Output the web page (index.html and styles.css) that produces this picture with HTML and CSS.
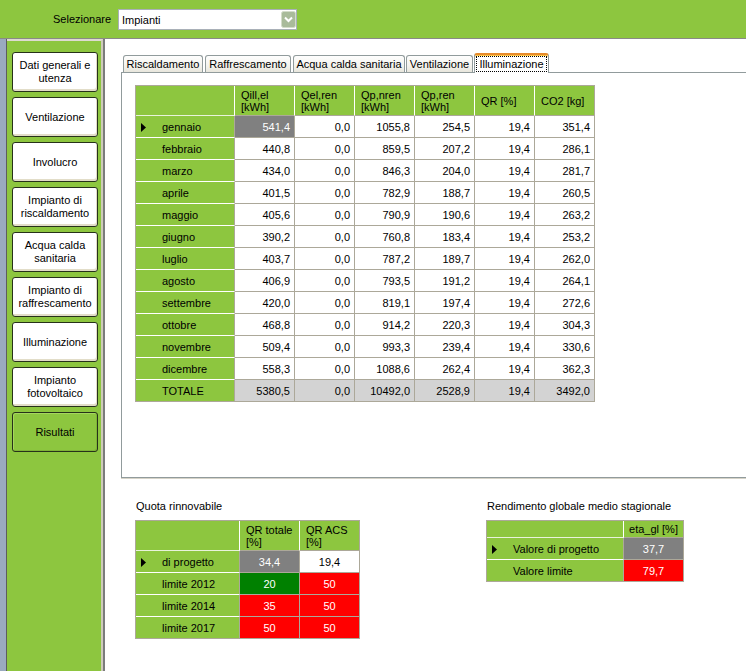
FILE: index.html
```html
<!DOCTYPE html>
<html lang="it">
<head>
<meta charset="utf-8">
<title>Risultati - Illuminazione</title>
<link rel="stylesheet" href="styles.css">
</head>
<body>
<header class="topbar">
  <span class="sel-label">Selezionare</span>
  <div class="combo">
    <span class="combo-text">Impianti</span>
    <svg class="combo-btn" width="15" height="17" viewBox="0 0 15 17" aria-hidden="true">
      <rect x="0.5" y="0.5" width="14" height="16" rx="2" fill="#a9bb9b" stroke="#d3dccb"/>
      <path d="M4 6.5 L7.5 10 L11 6.5" fill="none" stroke="#ffffff" stroke-width="2"/>
    </svg>
  </div>
</header>
<div class="main">
  <div class="strip"></div>
  <nav class="sidebar">
    <button class="navbtn">Dati generali e<br>utenza</button>
    <button class="navbtn">Ventilazione</button>
    <button class="navbtn">Involucro</button>
    <button class="navbtn">Impianto di<br>riscaldamento</button>
    <button class="navbtn">Acqua calda<br>sanitaria</button>
    <button class="navbtn">Impianto di<br>raffrescamento</button>
    <button class="navbtn">Illuminazione</button>
    <button class="navbtn">Impianto<br>fotovoltaico</button>
    <button class="navbtn navbtn-active">Risultati</button>
  </nav>
  <section class="content">
    <div class="tabs">
      <div class="tabstrip">
        <div class="tab t-risc">Riscaldamento</div>
        <div class="tab t-raff">Raffrescamento</div>
        <div class="tab t-acqua">Acqua calda sanitaria</div>
        <div class="tab t-vent">Ventilazione</div>
        <div class="tab t-illu active"><span class="focus">Illuminazione</span></div>
      </div>
      <div class="panel">
        <table class="grid g-main">
          <colgroup><col class="w-rh"><col class="w60"><col class="w60"><col class="w60"><col class="w60"><col class="w60"><col class="w60"></colgroup>
          <thead>
            <tr class="hrow">
              <th class="corner"></th>
              <th class="colh">Qill,el<br>[kWh]</th>
              <th class="colh">Qel,ren<br>[kWh]</th>
              <th class="colh">Qp,nren<br>[kWh]</th>
              <th class="colh">Qp,ren<br>[kWh]</th>
              <th class="colh">QR [%]</th>
              <th class="colh last">CO2 [kg]</th>
            </tr>
          </thead>
          <tbody>
            <tr><th class="rowh cur"><svg class="arrow" width="5" height="9" viewBox="0 0 5 9"><path d="M0 0 L5 4.5 L0 9 Z"/></svg>gennaio</th><td class="num sel">541,4</td><td class="num">0,0</td><td class="num">1055,8</td><td class="num">254,5</td><td class="num">19,4</td><td class="num">351,4</td></tr>
            <tr><th class="rowh">febbraio</th><td class="num">440,8</td><td class="num">0,0</td><td class="num">859,5</td><td class="num">207,2</td><td class="num">19,4</td><td class="num">286,1</td></tr>
            <tr><th class="rowh">marzo</th><td class="num">434,0</td><td class="num">0,0</td><td class="num">846,3</td><td class="num">204,0</td><td class="num">19,4</td><td class="num">281,7</td></tr>
            <tr><th class="rowh">aprile</th><td class="num">401,5</td><td class="num">0,0</td><td class="num">782,9</td><td class="num">188,7</td><td class="num">19,4</td><td class="num">260,5</td></tr>
            <tr><th class="rowh">maggio</th><td class="num">405,6</td><td class="num">0,0</td><td class="num">790,9</td><td class="num">190,6</td><td class="num">19,4</td><td class="num">263,2</td></tr>
            <tr><th class="rowh">giugno</th><td class="num">390,2</td><td class="num">0,0</td><td class="num">760,8</td><td class="num">183,4</td><td class="num">19,4</td><td class="num">253,2</td></tr>
            <tr><th class="rowh">luglio</th><td class="num">403,7</td><td class="num">0,0</td><td class="num">787,2</td><td class="num">189,7</td><td class="num">19,4</td><td class="num">262,0</td></tr>
            <tr><th class="rowh">agosto</th><td class="num">406,9</td><td class="num">0,0</td><td class="num">793,5</td><td class="num">191,2</td><td class="num">19,4</td><td class="num">264,1</td></tr>
            <tr><th class="rowh">settembre</th><td class="num">420,0</td><td class="num">0,0</td><td class="num">819,1</td><td class="num">197,4</td><td class="num">19,4</td><td class="num">272,6</td></tr>
            <tr><th class="rowh">ottobre</th><td class="num">468,8</td><td class="num">0,0</td><td class="num">914,2</td><td class="num">220,3</td><td class="num">19,4</td><td class="num">304,3</td></tr>
            <tr><th class="rowh">novembre</th><td class="num">509,4</td><td class="num">0,0</td><td class="num">993,3</td><td class="num">239,4</td><td class="num">19,4</td><td class="num">330,6</td></tr>
            <tr><th class="rowh">dicembre</th><td class="num">558,3</td><td class="num">0,0</td><td class="num">1088,6</td><td class="num">262,4</td><td class="num">19,4</td><td class="num">362,3</td></tr>
            <tr class="tot"><th class="rowh lastrow">TOTALE</th><td class="num">5380,5</td><td class="num">0,0</td><td class="num">10492,0</td><td class="num">2528,9</td><td class="num">19,4</td><td class="num">3492,0</td></tr>
          </tbody>
        </table>
      </div>
    </div>
    <div class="bottom">
      <div class="block quota">
        <div class="caption">Quota rinnovabile</div>
        <table class="grid g-quota">
          <colgroup><col class="w-rh2"><col class="w60"><col class="w60"></colgroup>
          <thead>
            <tr class="hrow">
              <th class="corner"></th>
              <th class="colh">QR totale<br>[%]</th>
              <th class="colh last">QR ACS<br>[%]</th>
            </tr>
          </thead>
          <tbody>
            <tr><th class="rowh cur"><svg class="arrow" width="5" height="9" viewBox="0 0 5 9"><path d="M0 0 L5 4.5 L0 9 Z"/></svg>di progetto</th><td class="ctr sel">34,4</td><td class="ctr">19,4</td></tr>
            <tr><th class="rowh">limite 2012</th><td class="ctr ok">20</td><td class="ctr ko">50</td></tr>
            <tr><th class="rowh">limite 2014</th><td class="ctr ko">35</td><td class="ctr ko">50</td></tr>
            <tr><th class="rowh lastrow">limite 2017</th><td class="ctr ko">50</td><td class="ctr ko">50</td></tr>
          </tbody>
        </table>
      </div>
      <div class="block rend">
        <div class="caption">Rendimento globale medio stagionale</div>
        <table class="grid g-rend">
          <colgroup><col class="w-rh3"><col class="w60"></colgroup>
          <thead>
            <tr class="hrow">
              <th class="corner"></th>
              <th class="colh last colh-center">eta_gl [%]</th>
            </tr>
          </thead>
          <tbody>
            <tr><th class="rowh cur"><svg class="arrow" width="5" height="9" viewBox="0 0 5 9"><path d="M0 0 L5 4.5 L0 9 Z"/></svg>Valore di progetto</th><td class="ctr sel">37,7</td></tr>
            <tr><th class="rowh lastrow">Valore limite</th><td class="ctr ko">79,7</td></tr>
          </tbody>
        </table>
      </div>
    </div>
  </section>
</div>
</body>
</html>
```

FILE: styles.css
```css
* { box-sizing: border-box; }

html, body { margin: 0; padding: 0; }

body {
  width: 746px;
  height: 671px;
  overflow: hidden;
  background: #ffffff;
  font-family: "Liberation Sans", Arial, sans-serif;
  font-size: 11px;
  color: #000000;
  display: flex;
  flex-direction: column;
}

/* ---------- top bar ---------- */
.topbar {
  flex: none;
  height: 39px;
  background: #8dc63f;
  border-bottom: 1px solid #8a8a86;
  display: flex;
  align-items: flex-start;
  padding: 9px 0 0 53px;
}

.sel-label {
  width: 65px;
  line-height: 21px;
}

.combo {
  width: 179px;
  height: 21px;
  background: #ffffff;
  border: 1px solid #a9b0b8;
  display: flex;
  align-items: center;
  justify-content: space-between;
  padding: 0 0 0 3px;
}

.combo-btn { display: block; }

/* ---------- main area ---------- */
.main {
  flex: 1;
  display: flex;
  min-height: 0;
}

.strip {
  flex: none;
  width: 7px;
  background: #9aaabf;
  border-right: 1px solid #5d5d5d;
}

.sidebar {
  flex: none;
  width: 96px;
  background: #8dc63f;
  border-top: 2px solid #dedbd0;
  border-right: 2px solid #cfcbbb;
  padding: 11px 0 0 5px;
  display: flex;
  flex-direction: column;
  gap: 5px;
}

.navbtn {
  width: 86px;
  height: 40px;
  margin: 0;
  padding: 0;
  font: inherit;
  line-height: 13px;
  color: #000000;
  text-align: center;
  background: #ffffff;
  border: 1px solid #26311a;
  border-radius: 3px;
  box-shadow: inset -1px -2px 0 #e2ddc8, inset 1px 1px 0 #ffffff;
}

.navbtn-active {
  background: #8dc63f;
  box-shadow: inset -1px -1px 0 #7fb337, inset 1px 1px 0 #a5d65f;
}

.content {
  flex: 1;
  min-width: 0;
  background: #ffffff;
  border-left: 2px solid #7c7c7c;
  padding: 14px 0 0 16px;
  display: flex;
  flex-direction: column;
}

/* ---------- tabs ---------- */
.tabstrip {
  height: 19px;
  display: flex;
  align-items: flex-end;
  padding-left: 2px;
}

.tab {
  height: 17px;
  border: 1px solid #919b9c;
  border-bottom: none;
  border-radius: 3px 3px 0 0;
  background: linear-gradient(#fefefe, #f4f3ee 60%, #e8e6dc);
  text-align: center;
  line-height: 16px;
  white-space: nowrap;
}

.t-risc { width: 80px; }
.t-raff { width: 86px; margin-left: 2px; }
.t-acqua { width: 112px; margin-left: 2px; }
.t-vent { width: 67px; margin-left: 1px; }
.t-illu { width: 75px; margin-left: 1px; }

.tab.active {
  height: 20px;
  margin-bottom: -1px;
  background: #ffffff;
  border-top: 2px solid #e68b2c;
  box-shadow: inset 0 1px 0 #ffc646;
  padding: 1px 1px 1px 1px;
  position: relative;
  z-index: 1;
}

.focus {
  display: block;
  height: 16px;
  border: 1px dotted #000000;
  line-height: 14px;
  text-align: center;
}

.panel {
  width: 630px;
  height: 406px;
  border: 1px solid #919b9c;
  box-shadow: 0 1px 0 #d6d3c8;
  background: #ffffff;
  padding: 12px 0 0 13px;
}

/* ---------- grids ---------- */
.grid {
  border-collapse: separate;
  border-spacing: 0;
  table-layout: fixed;
  border-top: 1px solid #aca899;
  border-left: 1px solid #aca899;
}

.grid th,
.grid td {
  box-sizing: border-box;
  padding: 0;
  border-right: 1px solid #aca899;
  border-bottom: 1px solid #aca899;
  white-space: nowrap;
  overflow: hidden;
  font-weight: normal;
  vertical-align: middle;
  height: 22px;
}

.g-main { width: 460px; }
.g-quota { width: 225px; }
.g-rend { width: 198px; }

.w-rh { width: 99px; }
.w-rh2 { width: 104px; }
.w-rh3 { width: 137px; }
.w60 { width: 60px; }

.g-main .hrow th,
.g-quota .hrow th { height: 30px; }
.g-rend .hrow th { height: 17px; }

.grid .corner {
  background: #8dc63f;
  border-bottom-color: #e8f3da;
  border-right-color: #ffffff;
}

.grid .colh {
  background: #8dc63f;
  border-right-color: #ffffff;
  text-align: left;
  padding-left: 6px;
  line-height: 12px;
}

.grid .colh.last { border-right-color: #aca899; }
.grid .colh.colh-center { text-align: center; padding-left: 0; }

.grid .rowh {
  background: #8dc63f;
  border-bottom-color: #ffffff;
  text-align: left;
  padding-left: 26px;
}

.grid .rowh.lastrow { border-bottom-color: #aca899; }

.grid .rowh.cur { padding-left: 5px; }

.arrow {
  display: inline-block;
  vertical-align: -1px;
  margin-right: 16px;
  fill: #000000;
}

.grid .num {
  background: #ffffff;
  text-align: right;
  padding-right: 4px;
}

.grid .ctr {
  background: #ffffff;
  text-align: center;
}

.grid .tot td { background: #d3d3d3; }

.grid td.sel { background: #808080; color: #ffffff; }
.grid td.ok { background: #008000; color: #ffffff; }
.grid td.ko { background: #ff0000; color: #ffffff; }

/* ---------- bottom ---------- */
.bottom {
  display: flex;
  align-items: flex-start;
  gap: 126px;
  margin: 22px 0 0 14px;
}

.caption {
  line-height: 13px;
  margin-bottom: 7px;
  padding-left: 1px;
}
```
